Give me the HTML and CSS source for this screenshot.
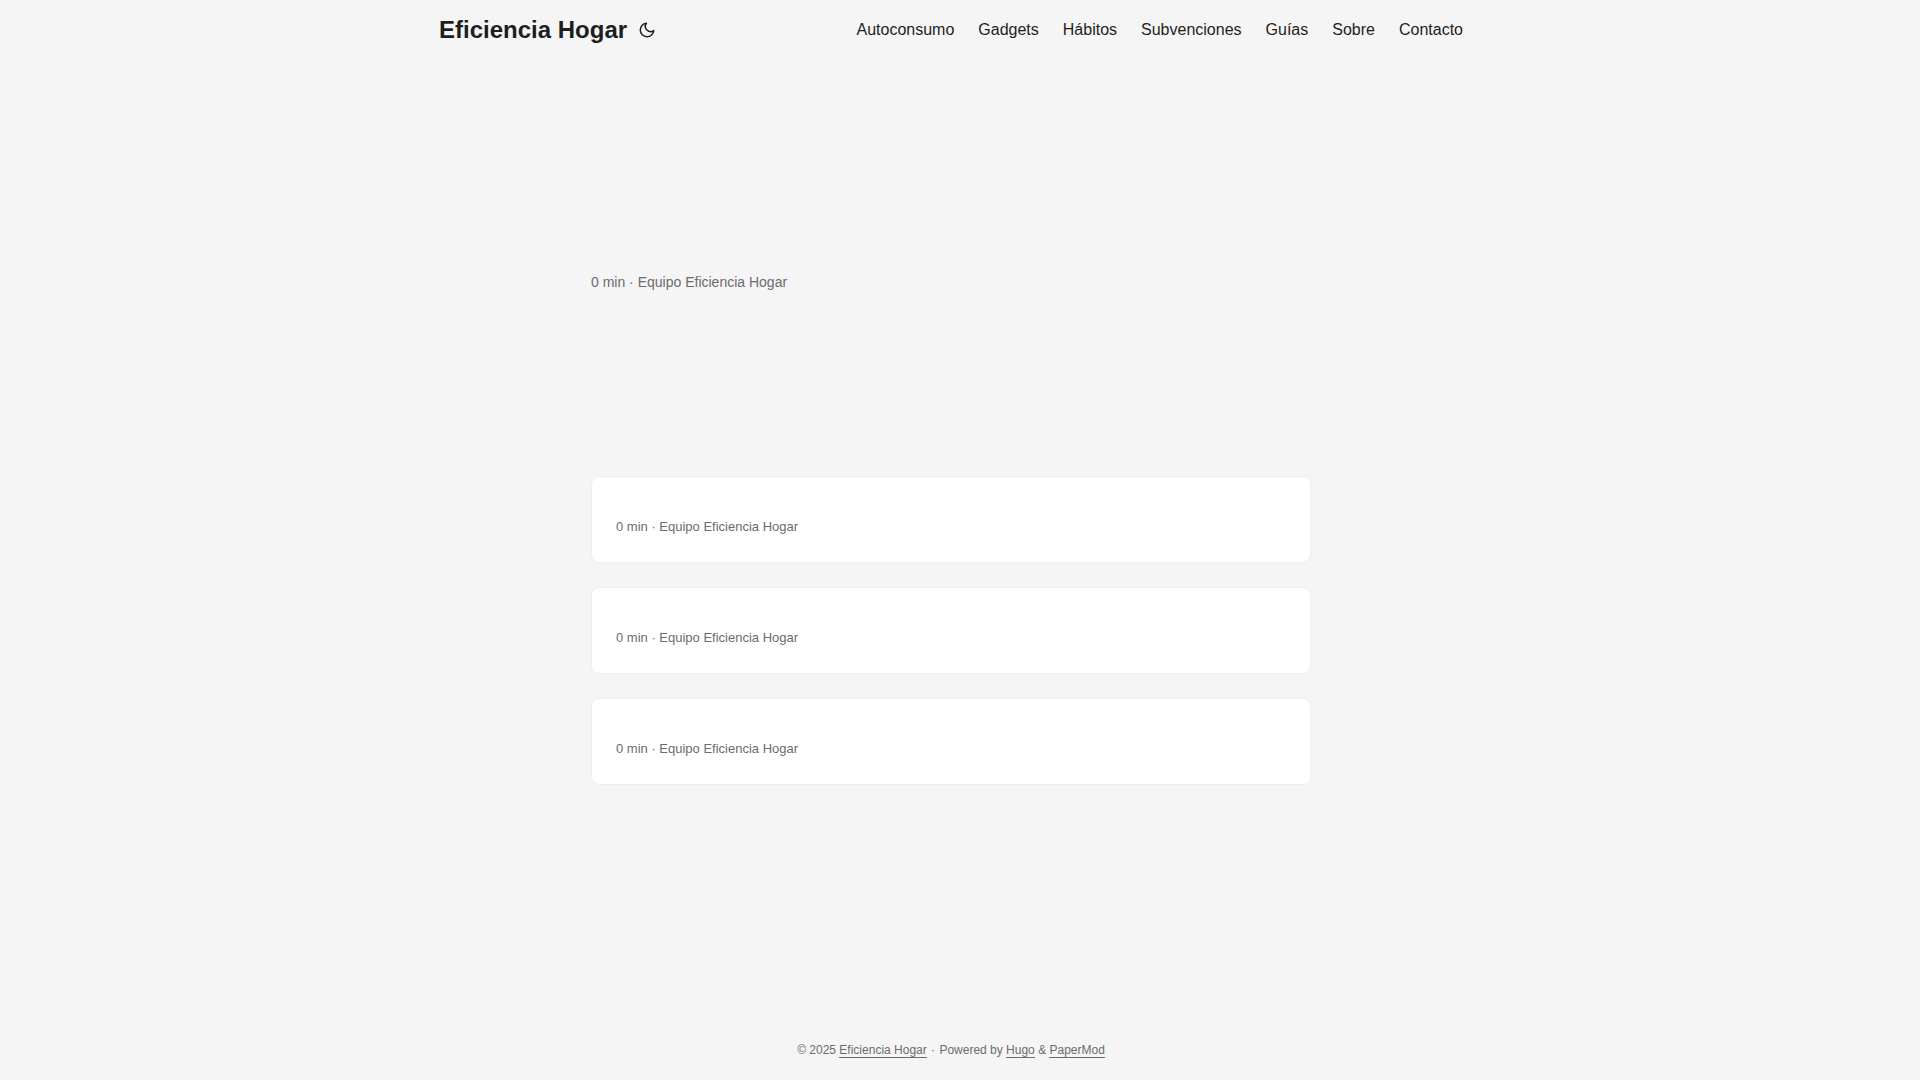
FILE: index.html
```html
<!DOCTYPE html>
<html lang="es">
<head>
    <meta charset="UTF-8">
    <meta name="viewport" content="width=device-width, initial-scale=1.0">
    <title>Eficiencia Hogar</title>
    <link rel="stylesheet" href="styles.css">
</head>
<body>
    <header class="header">
        <nav class="nav">
            <div class="logo">
                <a href="#">Eficiencia Hogar</a>
                <button class="theme-toggle" type="button" aria-label="Cambiar tema">
                    <svg width="24" height="18" viewBox="0 0 24 24" fill="none" stroke="currentColor" stroke-width="2" stroke-linecap="round" stroke-linejoin="round">
                        <path d="M21 12.79A9 9 0 1 1 11.21 3 7 7 0 0 0 21 12.79z"></path>
                    </svg>
                </button>
            </div>
            <ul class="menu">
                <li><a href="#">Autoconsumo</a></li>
                <li><a href="#">Gadgets</a></li>
                <li><a href="#">Hábitos</a></li>
                <li><a href="#">Subvenciones</a></li>
                <li><a href="#">Guías</a></li>
                <li><a href="#">Sobre</a></li>
                <li><a href="#">Contacto</a></li>
            </ul>
        </nav>
    </header>

    <main class="main">
        <article class="first-entry">
            <footer class="entry-footer">0 min · Equipo Eficiencia Hogar</footer>
        </article>
        <article class="post-entry">
            <footer class="entry-footer">0 min · Equipo Eficiencia Hogar</footer>
        </article>
        <article class="post-entry">
            <footer class="entry-footer">0 min · Equipo Eficiencia Hogar</footer>
        </article>
        <article class="post-entry">
            <footer class="entry-footer">0 min · Equipo Eficiencia Hogar</footer>
        </article>
    </main>

    <footer class="footer">
        <span>© 2025 <a href="#">Eficiencia Hogar</a></span> ·
        <span>Powered by <a href="#">Hugo</a> &amp; <a href="#">PaperMod</a></span>
    </footer>
</body>
</html>
```
FILE: styles.css
```css
:root {
    --gap: 24px;
    --scrollbar: 18px;
    --theme: #f5f5f5;
    --entry: #fff;
    --primary: #1e1e1e;
    --secondary: #6c6c6c;
    --border: #eee;
}

* {
    box-sizing: border-box;
    margin: 0;
    padding: 0;
}

body {
    display: flex;
    flex-direction: column;
    min-height: 100vh;
    padding-right: var(--scrollbar);
    background: var(--theme);
    color: var(--primary);
    font-family: "Liberation Sans", Arial, sans-serif;
    font-size: 16px;
}

a {
    color: inherit;
    text-decoration: none;
}

/* Cabecera */
.nav {
    display: flex;
    flex-wrap: wrap;
    justify-content: space-between;
    max-width: 1072px;
    margin: 0 auto;
    padding: 0 var(--gap);
    line-height: 60px;
}

.logo {
    display: flex;
    align-items: center;
    font-size: 24px;
    font-weight: 700;
}

.theme-toggle {
    display: flex;
    margin: 0 8px;
    border: none;
    background: none;
    color: inherit;
    cursor: pointer;
}

.menu {
    display: flex;
    flex-wrap: wrap;
    gap: 0 var(--gap);
    list-style: none;
}

/* Entradas */
.main {
    flex: 1;
    width: 100%;
    max-width: 768px;
    margin: 0 auto;
    padding: var(--gap);
}

.first-entry {
    display: flex;
    flex-direction: column;
    justify-content: center;
    min-height: 320px;
    margin: var(--gap) 0 48px;
}

.post-entry {
    margin-bottom: var(--gap);
    padding: var(--gap);
    background: var(--entry);
    border: 1px solid var(--border);
    border-radius: 8px;
}

.entry-footer {
    padding-top: 15px;
    color: var(--secondary);
    font-size: 13px;
    line-height: 22px;
}

.first-entry .entry-footer {
    padding-top: 28px;
    font-size: 14px;
}

/* Pie */
.footer {
    padding: 18px var(--gap);
    color: var(--secondary);
    font-size: 12px;
    line-height: 24px;
    text-align: center;
}

.footer span {
    margin: 0 1px;
}

.footer a {
    border-bottom: 1px solid var(--secondary);
}
```
